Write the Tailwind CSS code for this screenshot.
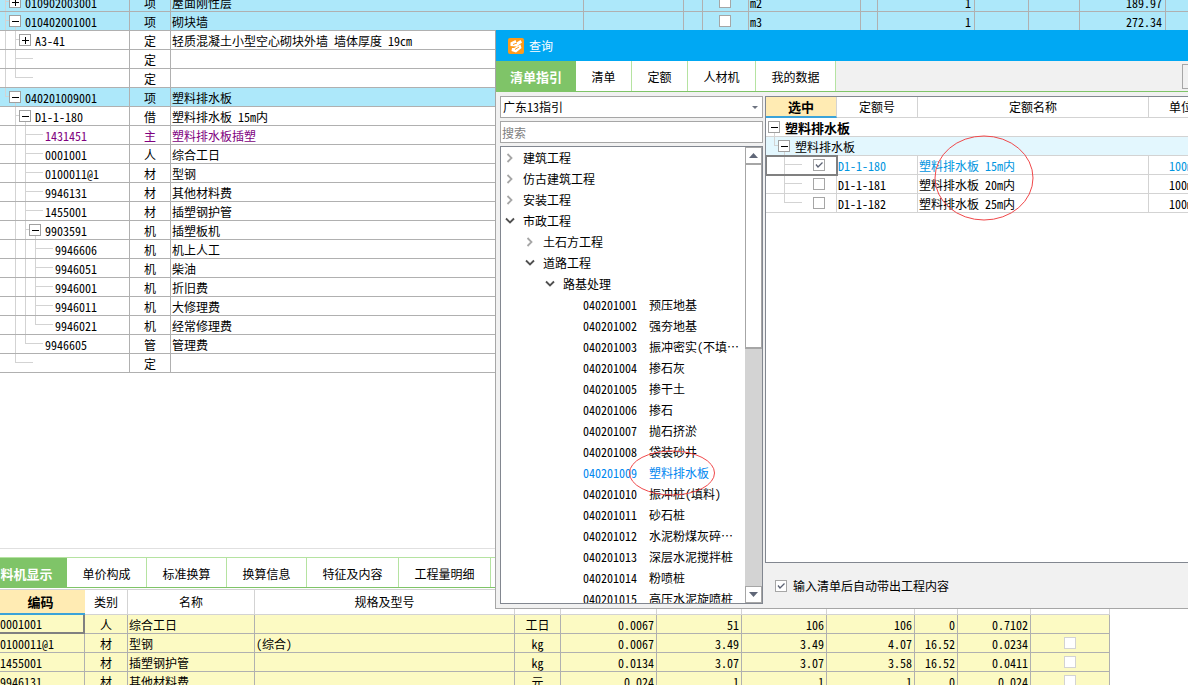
<!DOCTYPE html>
<html lang="zh-CN">
<head>
<meta charset="utf-8">
<title>查询</title>
<script src="https://cdn.jsdelivr.net/npm/@tailwindcss/browser@4"></script>
</head>
<body class="relative flex h-screen flex-col overflow-hidden bg-white font-['Noto_Sans_CJK_SC',sans-serif] text-[12px] leading-[18px] text-black [font-feature-settings:'hwid']">

<!-- Bill of quantities -->
<main class="min-h-0 flex-1 overflow-hidden">
  <table class="-mt-[7px] w-full table-fixed border-separate border-spacing-0 leading-4">
    <colgroup>
      <col class="w-[130px]"><col class="w-[41px]"><col class="w-[413px]"><col class="w-[100px]"><col class="w-[19px]"><col class="w-[46px]"><col class="w-[112px]"><col class="w-[17px]"><col class="w-[97px]"><col class="w-[54px]"><col class="w-[51px]"><col class="w-[86px]"><col>
    </colgroup>
    <tbody id="bill"></tbody>
  </table>
</main>

<!-- Detail panel -->
<section class="h-[137px] shrink-0 overflow-hidden border-t border-[#e0e0e0]">
  <nav class="mt-2 flex h-[31px] border-t border-b border-t-[#b5e3a1] border-b-[#7fc468] leading-[31px]">
    <button class="w-[67px] bg-[#7fc468] pr-[14px] text-[13px] font-bold text-white">料机显示</button>
    <button class="w-20 border-r border-[#b5e3a1]">单价构成</button>
    <button class="w-20 border-r border-[#b5e3a1]">标准换算</button>
    <button class="w-20 border-r border-[#b5e3a1]">换算信息</button>
    <button class="w-[92px] border-r border-[#b5e3a1]">特征及内容</button>
    <button class="w-[92px] border-r border-[#b5e3a1]">工程量明细</button>
  </nav>
  <table class="mt-px w-[1110px] table-fixed border-separate border-spacing-0">
    <colgroup>
      <col class="w-[85px]"><col class="w-[43px]"><col class="w-[127px]"><col class="w-[260px]"><col class="w-[46px]"><col class="w-[96px]"><col class="w-[85px]"><col class="w-[85px]"><col class="w-[88px]"><col class="w-[43px]"><col class="w-[73px]"><col class="w-[79px]">
    </colgroup>
    <thead>
      <tr class="h-[26px]">
        <th class="border-t border-b-2 border-t-[#d3d3d3] border-b-[#3ba3d9] bg-[#ffebb3] p-0 pr-1 text-[13px] font-bold">编码</th>
        <th class="border-t border-r border-b border-[#d3d3d3] p-0 font-normal">类别</th>
        <th class="border-t border-r border-b border-[#d3d3d3] p-0 font-normal">名称</th>
        <th class="border-t border-r border-b border-[#d3d3d3] p-0 font-normal">规格及型号</th>
        <th class="border-t border-r border-b border-[#d3d3d3] p-0"></th>
        <th class="border-t border-r border-b border-[#d3d3d3] p-0"></th>
        <th class="border-t border-r border-b border-[#d3d3d3] p-0"></th>
        <th class="border-t border-r border-b border-[#d3d3d3] p-0"></th>
        <th class="border-t border-r border-b border-[#d3d3d3] p-0"></th>
        <th class="border-t border-r border-b border-[#d3d3d3] p-0"></th>
        <th class="border-t border-r border-b border-[#d3d3d3] p-0"></th>
        <th class="border-t border-r border-b border-[#d3d3d3] p-0"></th>
      </tr>
    </thead>
    <tbody id="detail" class="bg-[#fcfac3] leading-4"></tbody>
  </table>
</section>

<!-- Query window -->
<div role="dialog" aria-labelledby="dlg-title" class="absolute top-[30px] right-0 left-[495px] flex h-[579px] flex-col border-b border-l border-[#a6a6a6] bg-[#f1f1f1]">
  <header class="flex h-[31px] shrink-0 items-center gap-[5px] bg-[#00a8f3] pl-3 text-white">
    <svg class="size-4" viewBox="0 0 16 16" aria-hidden="true">
      <rect width="16" height="16" rx="2" fill="#ff9b1a"/>
      <path d="M2.500 4.500 7.500 2 8.500 4.500 12.500 2 14 4.500 8.500 8.500 2.500 8Z M6 10 12.500 6.500 13.500 10 8 14.500 3.500 13 4 10Z" fill="#fff"/>
      <path d="M5 6.500 9 5 M7 11.500 11 9" stroke="#ff9b1a" stroke-width="1" fill="none"/>
    </svg>
    <h1 id="dlg-title">查询</h1>
  </header>
  <nav class="flex h-[31px] shrink-0 border-b border-[#7fc468] leading-8">
    <button class="w-20 bg-[#7fc468] text-[13px] font-bold text-white">清单指引</button>
    <button class="w-14 border-r border-[#b5e3a1] bg-white">清单</button>
    <button class="w-14 border-r border-[#b5e3a1] bg-white">定额</button>
    <button class="w-[68px] border-r border-[#b5e3a1] bg-white">人材机</button>
    <button class="w-20 border-r border-[#b5e3a1] bg-white">我的数据</button>
    <button aria-label="更多" class="mt-[3px] ml-auto h-[25px] w-[6px] border border-r-0 border-[#a6a6a6]"></button>
  </nav>

  <div class="flex min-h-0 flex-1">
    <aside class="flex w-[269px] shrink-0 flex-col pt-1 pr-[2px] pb-1 pl-1">
      <div class="grid h-[22px] w-[263px] shrink-0 items-center">
        <select aria-label="指引" class="h-[22px] w-full appearance-none border border-[#a6a6a6] bg-white pl-[2px] leading-5 outline-none [grid-area:1/1]"><option>广东13指引</option></select>
        <svg class="pointer-events-none mr-[5px] h-[3px] w-[6px] justify-self-end [grid-area:1/1]" viewBox="0 0 6 3" aria-hidden="true"><path d="M0 0H6L3 3Z" fill="#6d7380"/></svg>
      </div>
      <input type="text" aria-label="搜索" placeholder="搜索" class="mt-[3px] h-[22px] w-[263px] shrink-0 border border-[#a6a6a6] bg-white pl-px outline-none placeholder:text-[#808080]">
      <div class="mt-[3px] flex min-h-0 w-[263px] flex-1 border border-[#828790] bg-white">
        <ul id="tree" class="min-w-0 flex-1 overflow-hidden leading-[21px]"></ul>
        <div class="flex w-[17px] shrink-0 flex-col bg-[#d3d3d3]">
          <button aria-label="向上滚动" class="flex h-[18px] w-full items-center justify-center border border-b-2 border-[#a6a6a6] bg-white"><svg class="h-[5px] w-[9px]" viewBox="0 0 9 5"><path d="M0 5 4.500 0 9 5Z" fill="#606778"/></svg></button>
          <div class="h-[184px] border-x border-b-2 border-[#a6a6a6] bg-white"></div>
          <button aria-label="向下滚动" class="mt-auto flex h-[17px] w-full items-center justify-center border border-[#a6a6a6] bg-white"><svg class="h-[5px] w-[9px]" viewBox="0 0 9 5"><path d="M0 0H9L4.500 5Z" fill="#606778"/></svg></button>
        </div>
      </div>
    </aside>

    <div class="flex min-w-0 flex-1 flex-col pt-1">
      <div class="min-h-0 flex-1 overflow-hidden border border-r-0 border-[#828790] bg-white">
        <table class="w-[462px] table-fixed border-separate border-spacing-0">
          <colgroup><col class="w-[71px]"><col class="w-[81px]"><col class="w-[231px]"><col class="w-[79px]"></colgroup>
          <thead>
            <tr class="h-[21px]">
              <th class="border-r border-b-2 border-r-[#d3d3d3] border-b-[#3ba3d9] bg-[#ffebb3] p-0 text-[13px] font-bold">选中</th>
              <th class="border-r border-b border-[#d3d3d3] p-0 font-normal">定额号</th>
              <th class="border-r border-b border-[#d3d3d3] p-0 font-normal">定额名称</th>
              <th class="border-b border-[#d3d3d3] p-0 pl-5 text-left font-normal">单位</th>
            </tr>
          </thead>
          <tbody id="quota" class="leading-4"></tbody>
        </table>
      </div>
      <label class="flex h-[45px] shrink-0 items-center gap-[6px] pl-[10px]">
        <span class="grid size-3 shrink-0">
          <input type="checkbox" checked class="size-3 appearance-none border border-[#a6a6a6] bg-white [grid-area:1/1]">
          <svg class="pointer-events-none size-3 [grid-area:1/1]" viewBox="0 0 12 12"><path d="M3 5.500 5 8 9.500 3.500" fill="none" stroke="#5b6172" stroke-width="1.300"/></svg>
        </span>
        <span>输入清单后自动带出工程内容</span>
      </label>
    </div>
  </div>
</div>

<!-- Review marks -->
<svg class="pointer-events-none absolute top-[135px] left-[934px] h-[86px] w-[100px]" viewBox="0 0 100 86" aria-hidden="true"><ellipse cx="50" cy="43" rx="49" ry="42" fill="none" stroke="#f0484a"/></svg>
<svg class="pointer-events-none absolute top-[449px] left-[628px] h-[48px] w-[88px]" viewBox="0 0 88 48" aria-hidden="true"><ellipse cx="44" cy="24" rx="42.500" ry="22" fill="none" stroke="#f0484a"/></svg>

<script>
const LINE = '#d3d3d3';

// Tree guides of one 18px row. through: columns with a line down the whole row; own: x of the row's own guide
function guides(width, { through = [], own = null, last = false, box = null, open = false, boxX = 0, stub = 0 }) {
  let s = '';
  for (const x of through) s += `<path d="M${x}.5 0V19" stroke="${LINE}"/>`;
  if (own !== null) {
    s += `<path d="M${own}.5 0V${last ? 9 : 19}" stroke="${LINE}"/>`;
    s += `<path d="M${own} 8.5H${box ? boxX : own + stub}" stroke="${LINE}"/>`;
  }
  if (box) {
    s += `<rect x="${boxX + .5}" y="3.5" width="11" height="11" fill="#fff" stroke="#a0a0a0"/>`;
    s += `<path d="M${boxX + 3} 9H${boxX + 10}${box === '+' ? `M${boxX + 6} 6V13` : ''}" stroke="#000" shape-rendering="crispEdges"/>`;
    if (open) s += `<path d="M${boxX + 6}.5 15V19" stroke="${LINE}"/>`;
  }
  return `<svg class="h-[18px] shrink-0" style="width:${width}px" viewBox="0 0 ${width} 18" aria-hidden="true">${s}</svg>`;
}

// level, code, kind, name, box, through levels, last, unit, price
const bill = [
  [1, '010902003001', '项', '屋面刚性层', '+', [], false, 'm2', '189.97'],
  [1, '010402001001', '项', '砌块墙', '-', [], false, 'm3', '272.34'],
  [2, 'A3-41', '定', '轻质混凝土小型空心砌块外墙 墙体厚度 19cm', '+', [1], false],
  [2, '', '定', '', null, [1], false],
  [2, '', '定', '', null, [1], true],
  [1, '040201009001', '项', '塑料排水板', '-', [], true],
  [2, 'D1-1-180', '借', '塑料排水板 15m内', '-', [], false],
  [3, '1431451', '主', '塑料排水板插塑', null, [2], false],
  [3, '0001001', '人', '综合工日', null, [2], false],
  [3, '0100011@1', '材', '型钢', null, [2], false],
  [3, '9946131', '材', '其他材料费', null, [2], false],
  [3, '1455001', '材', '插塑钢护管', null, [2], false],
  [3, '9903591', '机', '插塑板机', '-', [2], false],
  [4, '9946606', '机', '机上人工', null, [2, 3], false],
  [4, '9946051', '机', '柴油', null, [2, 3], false],
  [4, '9946001', '机', '折旧费', null, [2, 3], false],
  [4, '9946011', '机', '大修理费', null, [2, 3], false],
  [4, '9946021', '机', '经常修理费', null, [2, 3], true],
  [3, '9946605', '管', '管理费', null, [2], true],
  [2, '', '定', '', null, [], true],
];
const gx = l => 10 * l - 5;
document.getElementById('bill').innerHTML = bill.map(([l, code, kind, name, box, th, last, unit, price]) => {
  const edge = 'h-[19px] border-r border-b border-[#b0b0b0] p-0';
  const c = edge + ' pt-[2px]';
  const g = guides(15 + 10 * l, { through: th.map(gx), own: gx(l), last, box, open: box === '-', boxX: gx(l) + 4, stub: 18 });
  const tone = kind === '项' ? 'bg-[#ade8fa]' : kind === '主' ? 'text-[#800080]' : '';
  const e = `<td class="${edge}"></td>`;
  return `<tr class="${tone}"><td class="${edge}"><div class="flex h-[18px]">${g}<span class="pt-[2px]">${code}</span></div></td>
    <td class="${c} text-center">${kind}</td><td class="${c} pl-px whitespace-nowrap">${name}</td>${e}${e}
    <td class="${edge} pr-px">${unit ? '<input type="checkbox" aria-label="锁定" class="mx-auto block size-3 appearance-none border border-[#a6a6a6] bg-white">' : ''}</td>
    <td class="${c} pl-px">${unit || ''}</td>${e}<td class="${c} pr-[3px] text-right">${unit ? 1 : ''}</td>${e}${e}
    <td class="${c} pr-[3px] text-right">${price || ''}</td><td class="h-[19px] border-b border-[#b0b0b0] p-0"></td></tr>`;
}).join('');

const detail = [
  ['0001001', '人', '综合工日', '', '工日', '0.0067', '51', '106', '106', '0', '0.7102', false],
  ['0100011@1', '材', '型钢', '(综合)', 'kg', '0.0067', '3.49', '3.49', '4.07', '16.52', '0.0234', true],
  ['1455001', '材', '插塑钢护管', '', 'kg', '0.0134', '3.07', '3.07', '3.58', '16.52', '0.0411', true],
  ['9946131', '材', '其他材料费', '', '元', '0.024', '1', '1', '1', '0', '0.024', true],
];
document.getElementById('detail').innerHTML = detail.map((r, i) => {
  const c = 'h-[19px] border-r border-b border-[#b0b0b0] p-0 pt-[2px]';
  const first = i === 0 ? 'h-[19px] border-r-2 border-b-2 border-[#808080] p-0 pt-px' : c;
  return `<tr><td class="${first}">${r[0]}</td><td class="${c} text-center">${r[1]}</td><td class="${c} pl-px">${r[2]}</td>
    <td class="${c} pl-px">${r[3]}</td><td class="${c} text-center">${r[4]}</td>
    ${r.slice(5, 11).map(v => `<td class="${c} pr-[2px] text-right">${v}</td>`).join('')}
    <td class="h-[19px] border-r border-b border-[#b0b0b0] p-0 pr-px">${r[11] ? '<input type="checkbox" aria-label="选择" class="mx-auto block size-3 appearance-none border border-[#d3d3d3] bg-white">' : ''}</td></tr>`;
}).join('');

const shut = '<svg class="mr-[8px] size-[10px] shrink-0" viewBox="0 0 10 10"><path d="M2.500 1 6.500 5 2.500 9" fill="none" stroke="#a6a6a6" stroke-width="1.800"/></svg>';
const open = '<svg class="mr-[8px] size-[10px] shrink-0" viewBox="0 0 10 10"><path d="M1 2.500 5 6.500 9 2.500" fill="none" stroke="#505050" stroke-width="1.800"/></svg>';
const folders = [[0, '建筑工程', shut], [0, '仿古建筑工程', shut], [0, '安装工程', shut], [0, '市政工程', open], [1, '土石方工程', shut], [1, '道路工程', open], [2, '路基处理', open]];
const pads = ['pl-1', 'pl-6', 'pl-11'];
const leaves = ['预压地基', '强夯地基', '振冲密实(不填…', '掺石灰', '掺干土', '掺石', '抛石挤淤', '袋装砂井', '塑料排水板', '振冲桩(填料)', '砂石桩', '水泥粉煤灰碎…', '深层水泥搅拌桩', '粉喷桩', '高压水泥旋喷桩'];
document.getElementById('tree').innerHTML =
  folders.map(([l, t, ic]) => `<li class="flex h-[21px] items-center ${pads[l]}">${ic}<span>${t}</span></li>`).join('') +
  leaves.map((t, i) => `<li class="flex h-[21px] pl-[82px] whitespace-nowrap ${i === 8 ? 'text-[#0087f0]' : ''}"><span class="w-[66px] shrink-0">${'0402010' + String(i + 1).padStart(2, '0')}</span><span>${t}</span></li>`).join('');

const q = 'h-[19px] border-r border-b border-[#d3d3d3] p-0';
const tick = '<svg class="pointer-events-none size-3 [grid-area:1/1]" viewBox="0 0 12 12"><path d="M3 5.500 5 8 9.500 3.500" fill="none" stroke="#5b6172" stroke-width="1.300"/></svg>';
document.getElementById('quota').innerHTML =
  `<tr><td colspan="4" class="h-[19px] border-b border-[#d3d3d3] p-0"><div class="flex h-[18px] text-[13px] font-bold">${guides(19, { box: '-', open: true, boxX: 2 })}<span class="pt-[2px]">塑料排水板</span></div></td></tr>
   <tr class="bg-[#e3f7fe]"><td colspan="4" class="h-[19px] border-b border-[#d3d3d3] p-0"><div class="flex h-[18px]">${guides(29, { own: 8, last: true, box: '-', open: true, boxX: 12 })}<span class="pt-[2px]">塑料排水板</span></div></td></tr>` +
  [['180', '15'], ['181', '20'], ['182', '25']].map(([n, m], i) =>
    `<tr class="${i === 0 ? 'text-[#0095e0]' : ''}"><td class="${q} ${i === 0 ? 'outline-2 -outline-offset-1 outline-[#808080]' : ''}"><div class="flex h-[18px] items-center">${guides(47, { own: 18, last: i === 2, stub: 18 })}
      <span class="grid size-3"><input type="checkbox" aria-label="D1-1-${n}" ${i === 0 ? 'checked' : ''} class="size-3 appearance-none border border-[#a6a6a6] bg-white [grid-area:1/1]">${i === 0 ? tick : ''}</span></div></td>
     <td class="${q} pt-[2px] pl-px">D1-1-${n}</td><td class="${q} pt-[2px] pl-px">塑料排水板 ${m}m内</td><td class="h-[19px] border-b border-[#d3d3d3] p-0 pt-[2px] pl-5">100m</td></tr>`).join('');
</script>
</body>
</html>
